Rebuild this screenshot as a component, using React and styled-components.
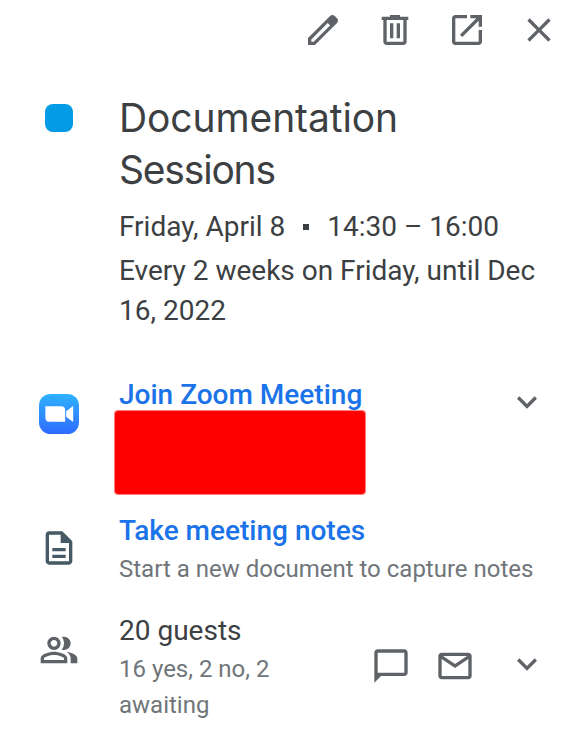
import React from 'react';
import styled, { createGlobalStyle } from 'styled-components';

const icons = {
  edit: 'M20.41 4.94l-1.35-1.35c-.78-.78-2.05-.78-2.83 0L3 16.82V21h4.18L20.41 7.77c.79-.78.79-2.05 0-2.83zM6.41 19.06L5 19v-1.36l9.82-9.82 1.41 1.41-9.82 9.83z',
  trash: 'M15 4V3H9v1H4v2h1v13c0 1.1.9 2 2 2h10c1.1 0 2-.9 2-2V6h1V4h-5zm2 15H7V6h10v13zM9 8h2v9H9zm4 0h2v9h-2z',
  open: 'M19 19H5V5h7V3H5c-1.11 0-2 .9-2 2v14c0 1.1.89 2 2 2h14c1.1 0 2-.9 2-2v-7h-2v7zM14 3v2h3.59l-9.83 9.83 1.41 1.41L19 6.41V10h2V3h-7z',
  close: 'M19 6.41L17.59 5 12 10.59 6.41 5 5 6.41 10.59 12 5 17.59 6.41 19 12 13.41 17.59 19 19 17.59 13.41 12z',
  chevron: 'M16.59 8.59L12 13.17 7.41 8.59 6 10l6 6 6-6z',
  document: 'M8 16h8v2H8zm0-4h8v2H8zm6-10H6c-1.1 0-2 .9-2 2v16c0 1.1.89 2 1.99 2H18c1.1 0 2-.9 2-2V8l-6-6zm4 18H6V4h7v5h5v11z',
  people: 'M15 8c0-1.42-.5-2.73-1.33-3.76.42-.14.86-.24 1.33-.24 2.21 0 4 1.79 4 4s-1.79 4-4 4c-.43 0-.84-.09-1.23-.21-.03-.01-.06-.02-.1-.03A5.98 5.98 0 0 0 15 8zm1.66 5.13C18.03 14.06 19 15.32 19 17v3h4v-3c0-2.18-3.58-3.47-6.34-3.87zM9 6c-1.1 0-2 .9-2 2s.9 2 2 2 2-.9 2-2-.9-2-2-2zm0 9c-2.7 0-5.8 1.29-6 2.01V18h12v-1c-.2-.71-3.3-2-6-2zM9 4c2.21 0 4 1.79 4 4s-1.79 4-4 4-4-1.79-4-4 1.79-4 4-4zm0 9c2.67 0 8 1.34 8 4v3H1v-3c0-2.66 5.33-4 8-4z',
  chat: 'M20 2H4c-1.1 0-2 .9-2 2v18l4-4h14c1.1 0 2-.9 2-2V4c0-1.1-.9-2-2-2zm0 14H4V4h16v12z',
  mail: 'M20 4H4c-1.1 0-2 .9-2 2v12c0 1.1.9 2 2 2h16c1.1 0 2-.9 2-2V6c0-1.1-.9-2-2-2zm-.8 2L12 10.8 4.8 6h14.4zM4 18V7.87l8 5.33 8-5.33V18H4z',
};

const Icon = ({ name }) => (
  <IconSvg viewBox="0 0 24 24" aria-hidden="true">
    <path fillRule="evenodd" d={icons[name]} />
  </IconSvg>
);

const ZoomLogo = () => (
  <IconSvg viewBox="0 0 40 40" aria-hidden="true">
    <defs>
      <linearGradient id="zoomBlue" x1="0" y1="0" x2="0" y2="1">
        <stop offset="0" stopColor="#2eb2ff" />
        <stop offset="1" stopColor="#2f6bff" />
      </linearGradient>
    </defs>
    <rect width="40" height="40" rx="11.5" fill="url(#zoomBlue)" />
    <path
      fill="#fff"
      d="M6.4 12.3h15.8a4 4 0 0 1 4 4v11.4H10.4a4 4 0 0 1-4-4zM27.2 17.2l6.2-4.7c.4-.3.8-.1.8.4v14.2c0 .5-.4.7-.8.4l-6.2-4.7z"
    />
  </IconSvg>
);

const App = () => {
  return (
    <>
      <GlobalStyle />
      <Card>
        <Toolbar>
          <IconButton aria-label="Edit event"><Icon name="edit" /></IconButton>
          <IconButton aria-label="Delete event"><Icon name="trash" /></IconButton>
          <IconButton aria-label="Open in new window"><Icon name="open" /></IconButton>
          <IconButton aria-label="Close"><Icon name="close" /></IconButton>
        </Toolbar>

        <Row $height={282}>
          <Leading $top={12}>
            <ColorSwatch />
          </Leading>
          <Content>
            <Title>
              <TitleLine $tracking={-0.1}>Documentation</TitleLine>
              <TitleLine $tracking={-1.2}>Sessions</TitleLine>
            </Title>
            <DateLine>
              <span>Friday, April 8</span>
              <Dot />
              <span>14:30 – 16:00</span>
            </DateLine>
            <Text>Every 2 weeks on Friday, until Dec 16, 2022</Text>
          </Content>
        </Row>

        <Row $height={136}>
          <Leading $top={20}>
            <ZoomLogo />
          </Leading>
          <Content $top={1}>
            <ActionLink href="#">Join Zoom Meeting</ActionLink>
            <Redacted />
          </Content>
          <Trailing $top={8}>
            <IconButton aria-label="Show joining info"><Icon name="chevron" /></IconButton>
          </Trailing>
        </Row>

        <Row $height={100}>
          <Leading $top={18} $color="#455a64">
            <Icon name="document" />
          </Leading>
          <Content $top={1}>
            <ActionLink href="#">Take meeting notes</ActionLink>
            <SubText>Start a new document to capture notes</SubText>
          </Content>
        </Row>

        <Row $height={113}>
          <Leading $top={20}>
            <Icon name="people" />
          </Leading>
          <Content $top={1}>
            <Text>20 guests</Text>
            <GuestStatus>16 yes, 2 no, 2 awaiting</GuestStatus>
          </Content>
          <Trailing $top={36}>
            <IconButton aria-label="Chat with guests"><Icon name="chat" /></IconButton>
            <IconButton aria-label="Email guests"><Icon name="mail" /></IconButton>
          </Trailing>
          <Trailing $top={34} $left={32}>
            <IconButton aria-label="Show guests"><Icon name="chevron" /></IconButton>
          </Trailing>
        </Row>
      </Card>
    </>
  );
};

export default App;

const GlobalStyle = createGlobalStyle`
  * {
    box-sizing: border-box;
  }

  body {
    margin: 0;
    background-color: #ffffff;
    overflow: hidden;
  }
`;

const Card = styled.div`
  width: 579px;
  height: 744px;
  background-color: #ffffff;
  color: #3c4043;
  font-family: Roboto, Arial, sans-serif;
`;

const Toolbar = styled.div`
  display: flex;
  justify-content: flex-end;
  gap: 32px;
  height: 92px;
  padding: 10px 20px 0 0;
`;

const IconSvg = styled.svg`
  display: block;
  width: 40px;
  height: 40px;
  fill: currentColor;
`;

const IconButton = styled.button`
  width: 40px;
  height: 40px;
  padding: 0;
  border: none;
  background: none;
  color: #5f6368;
  cursor: pointer;
`;

const Row = styled.div`
  display: flex;
  align-items: flex-start;
  height: ${({ $height }) => $height}px;
  padding-right: 32px;
`;

const Leading = styled.div`
  display: flex;
  flex: 0 0 119px;
  justify-content: center;
  padding-top: ${({ $top }) => $top}px;
  padding-right: 1px;
  color: ${({ $color }) => $color || '#5f6368'};
`;

const ColorSwatch = styled.div`
  width: 28px;
  height: 28px;
  border-radius: 8px;
  background-color: #039be5;
`;

const Content = styled.div`
  flex: 1;
  min-width: 0;
  padding-top: ${({ $top }) => $top || 0}px;
`;

const Trailing = styled.div`
  display: flex;
  gap: 24px;
  padding-top: ${({ $top }) => $top}px;
  margin-left: ${({ $left }) => $left || 0}px;
`;

const Title = styled.h1`
  margin: 0 0 11px;
  font-family: Inter, sans-serif;
  font-size: 39px;
  font-weight: 400;
  line-height: 52px;
`;

const TitleLine = styled.span`
  display: block;
  letter-spacing: ${({ $tracking }) => $tracking}px;
`;

const Text = styled.div`
  font-size: 28px;
  line-height: 40px;
`;

const DateLine = styled(Text)`
  display: flex;
  align-items: center;
  margin-bottom: 4px;
`;

const Dot = styled.i`
  width: 6px;
  height: 6px;
  margin: 0 18px;
  background-color: #3c4043;
`;

const ActionLink = styled.a`
  display: block;
  color: #1a73e8;
  font-size: 28px;
  font-weight: 500;
  line-height: 40px;
  text-decoration: none;
`;

const SubText = styled.div`
  color: #70757a;
  font-size: 24px;
  line-height: 36px;
`;

const GuestStatus = styled(SubText)`
  max-width: 200px;
`;

/* Covers the meeting link and passcode */
const Redacted = styled.div`
  width: 252px;
  height: 85px;
  margin: -5px 0 0 -5px;
  border: 1px solid rgba(255, 0, 0, 0.5);
  border-radius: 4px;
  background-color: #ff0000;
  background-clip: padding-box;
`;
